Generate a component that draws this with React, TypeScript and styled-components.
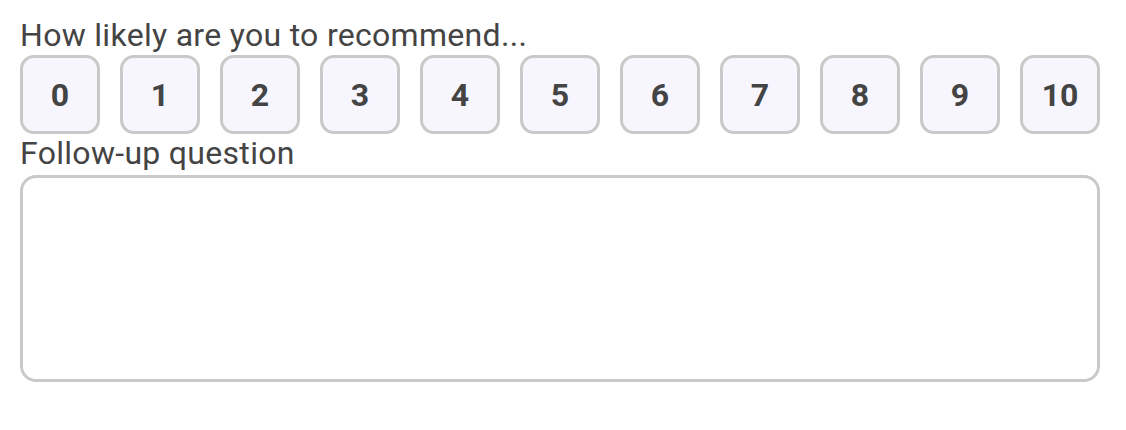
import React, { useState } from "react";
import styled, { createGlobalStyle } from "styled-components";

const GlobalStyle = createGlobalStyle`
  body {
    margin: 0;
    background: #ffffff;
    font-family: Roboto, "Liberation Sans", sans-serif;
  }
`;

const scores = Array.from({ length: 11 }, (_, i) => i);

export default function App() {
  const [selected, setSelected] = useState<number | null>(null);

  return (
    <>
      <GlobalStyle />
      <StyledSurvey>
        <Label>How likely are you to recommend...</Label>
        <ScoreRow>
          {scores.map((score) => (
            <ScoreButton
              key={score}
              $active={selected === score}
              onClick={() => setSelected(score)}
            >
              {score}
            </ScoreButton>
          ))}
        </ScoreRow>
        <Label>Follow-up question</Label>
        <Answer />
      </StyledSurvey>
    </>
  );
}

const StyledSurvey = styled.div`
  width: 1080px;
  padding: 17px 20px 20px;
  display: flex;
  flex-direction: column;
`;

const Label = styled.label`
  font-size: 32px;
  line-height: 36px;
  letter-spacing: 0.3px;
  color: #444444;
`;

const ScoreRow = styled.div`
  display: flex;
  justify-content: space-between;
  margin: 2px 0 1px;
`;

const ScoreButton = styled.button<{ $active: boolean }>`
  width: 80px;
  height: 79px;
  box-sizing: border-box;
  border: 3px solid ${({ $active }) => ($active ? "#7b6cf0" : "#c9c9c9")};
  border-radius: 14px;
  background: ${({ $active }) => ($active ? "#e6e1fd" : "#f7f6fe")};
  color: #444444;
  font-family: Roboto, "Liberation Sans", sans-serif;
  font-weight: 700;
  font-size: 32px;
  cursor: pointer;
  padding: 0;
`;

const Answer = styled.textarea`
  box-sizing: border-box;
  width: 1080px;
  height: 207px;
  margin-top: 4px;
  border: 3px solid #c9c9c9;
  border-radius: 16px;
  resize: none;
  padding: 12px;
  font-family: Roboto, "Liberation Sans", sans-serif;
  font-size: 24px;
  color: #444444;
  outline: none;
`;
